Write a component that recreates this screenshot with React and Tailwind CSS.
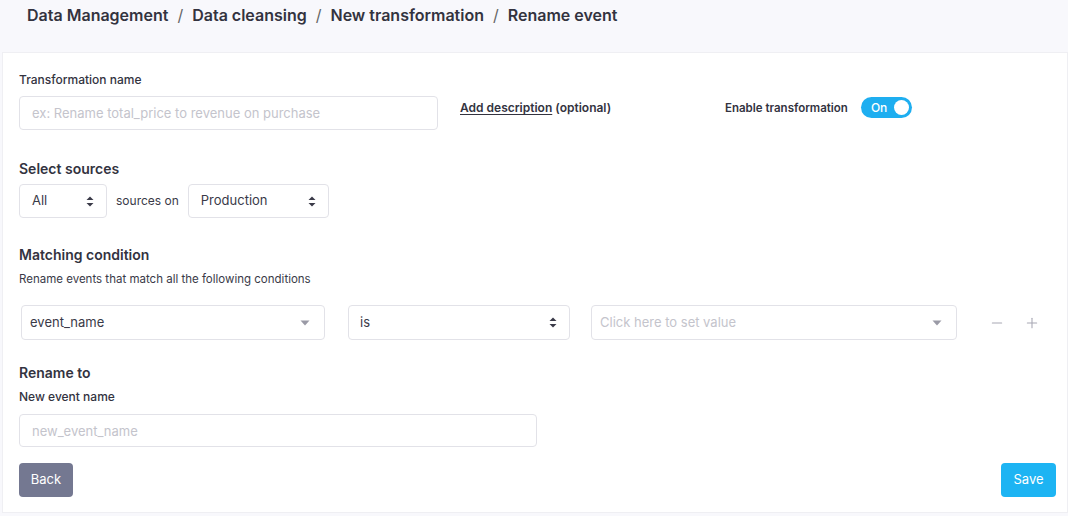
import { Minus, Plus } from 'lucide-react';

const font = { fontFamily: 'Inter, "Noto Sans", sans-serif' };

function UpDown() {
  return (
    <svg width="8" height="11" viewBox="0 0 8 11" className="text-[#3a3a48]">
      <path d="M4 0.5 L7.5 4 L0.5 4 Z" fill="currentColor" />
      <path d="M4 10.5 L7.5 7 L0.5 7 Z" fill="currentColor" />
    </svg>
  );
}

function Caret() {
  return (
    <svg width="10" height="6" viewBox="0 0 10 6" className="text-[#9a9aa6]">
      <path d="M0.5 0.5 L9.5 0.5 L5 5.5 Z" fill="currentColor" />
    </svg>
  );
}

function NativeSelect({ value, width }) {
  return (
    <div className={`flex h-[34px] items-center justify-between rounded-[4px] border border-[#e2e2e8] bg-white pl-[12px] pr-[12px] text-[13px] text-[#3a3a48] ${width}`}>
      <span>{value}</span>
      <UpDown />
    </div>
  );
}

export default function App() {
  return (
    <div style={font} className="min-h-[516px] bg-[#f8f8fc] text-[#2f2f3b]">
      {/* Breadcrumb */}
      <div className="flex h-[52px] items-start px-[27px] pt-[5px] text-[16px] font-semibold leading-[20px] text-[#33333f]">
        <span>Data Management</span>
        <span className="mx-[9px] font-normal text-[#666]">/</span>
        <span>Data cleansing</span>
        <span className="mx-[9px] font-normal text-[#666]">/</span>
        <span>New transformation</span>
        <span className="mx-[9px] font-normal text-[#666]">/</span>
        <span>Rename event</span>
      </div>

      <div className="ml-[2px] border border-[#efeff3] bg-white pb-[15px] pl-[16px] pr-[11px] pt-[19px]">
        {/* Name + description + toggle */}
        <div className="flex items-start">
          <div className="w-[419px]">
            <div className="text-[12px] font-medium leading-[16px] text-[#33333f]">Transformation name</div>
            <input
              className="mt-[8px] h-[34px] w-full rounded-[4px] border border-[#e2e2e8] px-[12px] text-[13px] outline-none placeholder:text-[#c4c4cc]"
              placeholder="ex: Rename total_price to revenue on purchase"
            />
          </div>
          <div className="ml-[22px] mt-[28px] w-[265px] text-[12px] font-semibold leading-[16px] text-[#33333f]">
            <span className="underline underline-offset-2">Add description</span> (optional)
          </div>
          <div className="mt-[25px] flex items-center gap-[13px]">
            <span className="text-[11.5px] font-semibold leading-[16px] text-[#33333f]">Enable transformation</span>
            <div className="flex h-[21px] w-[51px] items-center justify-between rounded-full bg-[#1eaef0] pl-[10px] pr-[3px]">
              <span className="text-[12px] font-medium text-white">On</span>
              <span className="h-[15px] w-[15px] rounded-full bg-white" />
            </div>
          </div>
        </div>

        {/* Select sources */}
        <div className="mt-[29px] text-[14px] font-semibold leading-[20px] text-[#33333f]">Select sources</div>
        <div className="mt-[5px] flex items-center">
          <NativeSelect value="All" width="w-[88px]" />
          <span className="mx-[9px] text-[12px] text-[#3a3a48]">sources on</span>
          <NativeSelect value="Production" width="w-[141px]" />
        </div>

        {/* Matching condition */}
        <div className="mt-[27px] text-[14px] font-semibold leading-[20px] text-[#33333f]">Matching condition</div>
        <div className="mt-[6px] text-[11.5px] leading-[16px] text-[#3a3a48]">Rename events that match all the following conditions</div>
        <div className="mt-[18px] flex items-center pl-[2px]">
          <div className="flex h-[35px] w-[304px] items-center justify-between rounded-[4px] border border-[#e2e2e8] pl-[8px] pr-[14px] text-[13px] text-[#3a3a48]">
            <span>event_name</span>
            <Caret />
          </div>
          <div className="ml-[23px] flex h-[35px] w-[222px] items-center justify-between rounded-[4px] border border-[#e2e2e8] pl-[11px] pr-[12px] text-[13px] text-[#3a3a48]">
            <span>is</span>
            <UpDown />
          </div>
          <div className="ml-[21px] flex h-[35px] w-[366px] items-center justify-between rounded-[4px] border border-[#e2e2e8] pl-[8px] pr-[14px] text-[13px] text-[#c4c4cc]">
            <span>Click here to set value</span>
            <Caret />
          </div>
          <div className="ml-[32px] flex items-center gap-[19px] text-[#a8a8b4]">
            <Minus size={16} strokeWidth={1.6} />
            <Plus size={16} strokeWidth={1.6} />
          </div>
        </div>

        {/* Rename to */}
        <div className="mt-[23px] text-[14px] font-semibold leading-[20px] text-[#33333f]">Rename to</div>
        <div className="mt-[6px] text-[12px] font-medium leading-[16px] text-[#33333f]">New event name</div>
        <input
          className="mt-[9px] h-[33px] w-[518px] rounded-[4px] border border-[#e2e2e8] px-[12px] text-[13px] outline-none placeholder:text-[#c4c4cc]"
          placeholder="new_event_name"
        />

        {/* Actions */}
        <div className="mt-[16px] flex items-center justify-between">
          <button className="h-[34px] w-[54px] rounded-[4px] bg-[#747891] text-[13px] text-white">Back</button>
          <button className="h-[34px] w-[55px] rounded-[4px] bg-[#1db4f3] text-[13px] text-white">Save</button>
        </div>
      </div>
    </div>
  );
}
